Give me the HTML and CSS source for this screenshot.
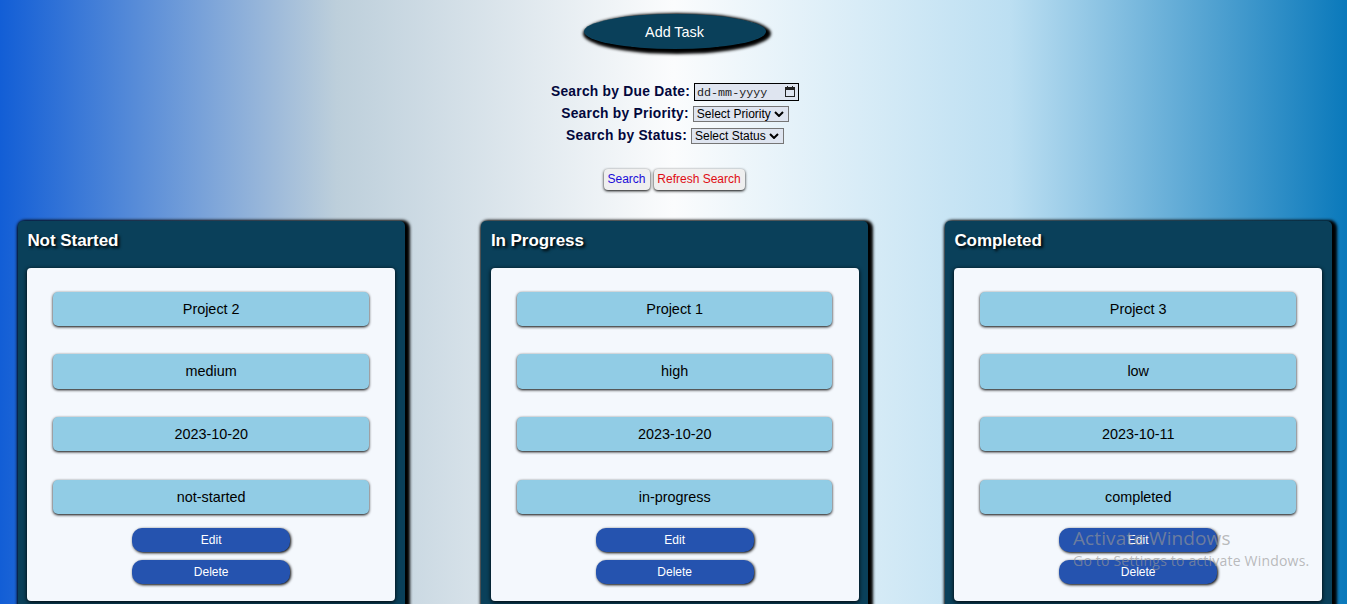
FILE: index.html
```html
<!DOCTYPE html>
<html lang="en">
<head>
<meta charset="utf-8">
<title>Task Board</title>
<link rel="stylesheet" href="styles.css">
</head>
<body>
<header class="top"><button class="add-task">Add Task</button></header>
<form class="filters">
  <div class="filter-row"><label>Search by Due Date:</label><span class="date-field"><span class="date-text">dd-mm-yyyy</span><svg class="calendar" viewBox="0 0 10 11"><path d="M0 1h2V0h1v1h4V0h1v1h2v10H0zM1 4v6h8V4z" fill="#222" fill-rule="evenodd"/></svg></span></div>
  <div class="filter-row"><label>Search by Priority:</label><span class="select priority"><span>Select Priority</span><svg class="chevron" viewBox="0 0 10 6"><path d="M1 1l4 4 4-4" fill="none" stroke="#000" stroke-width="2"/></svg></span></div>
  <div class="filter-row"><label>Search by Status:</label><span class="select status"><span>Select Status</span><svg class="chevron" viewBox="0 0 10 6"><path d="M1 1l4 4 4-4" fill="none" stroke="#000" stroke-width="2"/></svg></span></div>
  <div class="actions"><button type="button" class="action search">Search</button><button type="button" class="action refresh">Refresh Search</button></div>
</form>
<main class="board">
  <section class="column">
    <h2 class="title">Not Started</h2>
    <div class="card">
      <p class="item">Project 2</p><p class="item">medium</p><p class="item">2023-10-20</p><p class="item">not-started</p>
      <button class="task-btn">Edit</button><button class="task-btn">Delete</button>
    </div>
  </section>
  <section class="column">
    <h2 class="title">In Progress</h2>
    <div class="card">
      <p class="item">Project 1</p><p class="item">high</p><p class="item">2023-10-20</p><p class="item">in-progress</p>
      <button class="task-btn">Edit</button><button class="task-btn">Delete</button>
    </div>
  </section>
  <section class="column">
    <h2 class="title">Completed</h2>
    <div class="card">
      <p class="item">Project 3</p><p class="item">low</p><p class="item">2023-10-11</p><p class="item">completed</p>
      <button class="task-btn">Edit</button><button class="task-btn">Delete</button>
    </div>
  </section>
</main>
<aside class="watermark"><div class="wm-title">Activate Windows</div><div class="wm-text">Go to Settings to activate Windows.</div></aside>
</body>
</html>
```

FILE: styles.css
```css
* { box-sizing: border-box; }
html { height: 100%; overflow: hidden; }
body {
  margin: 0;
  height: 604px;
  overflow: hidden;
  font-family: "Liberation Sans", Arial, sans-serif;
  background: linear-gradient(to right, #125ed6 0%, #bdcfdb 25%, #fbfcfd 50%, #bcdff2 75%, #0a79bb 100%);
}
button { font-family: inherit; border: 0; padding: 0; }
.top { display: flex; justify-content: center; padding: 14px 0 0 2px; }
.add-task {
  width: 182px;
  height: 35px;
  border-radius: 50%;
  background: #0a405a;
  color: #fff;
  font-size: 14.4px;
  box-shadow: 2px 2px 3px 3px #000;
}
.filters { display: flex; flex-direction: column; align-items: center; padding: 32px 0 0 3px; }
.filter-row { display: flex; align-items: center; gap: 4px; height: 22px; }
.filter-row label { font-size: 13.8px; font-weight: bold; letter-spacing: 0.26px; color: #02073c; line-height: 20px; }
.date-field {
  display: flex;
  align-items: center;
  justify-content: space-between;
  width: 105px;
  height: 18px;
  padding: 0 3px 0 2px;
  border: 1px solid #000;
  background: #dfe5f0;
}
.date-text { font: 11.7px "Liberation Mono", monospace; color: #222; padding-top: 1px; }
.calendar { width: 10px; height: 11px; margin-bottom: 1px; }
.select {
  display: flex;
  align-items: center;
  justify-content: space-between;
  height: 16px;
  padding: 0 4px 0 3px;
  border: 1px solid #767676;
  background: #dfe5f0;
  color: #000;
  font-size: 12px;
  line-height: 14px;
  white-space: nowrap;
}
.chevron { width: 10px; height: 6px; }
.priority { width: 96px; }
.status { width: 93px; }
.actions { display: flex; gap: 4px; margin: 22px 2px 0 0; }
.action {
  height: 21px;
  padding-bottom: 2px;
  border-radius: 4px;
  background: #efefef;
  font-size: 12px;
  box-shadow: 0 1px 3px #000;
}
.search { width: 46px; color: #1b0bd8; }
.refresh { width: 91px; color: #e00b12; }
.board { display: flex; justify-content: space-between; padding: 31px 15.4px 0 17.8px; }
.column {
  width: 386.8px;
  height: 390px;
  padding: 0 9.6px;
  border-radius: 5px;
  background: #0a405a;
  box-shadow: 2px 2px 3px 3px #000;
}
.title {
  margin: 0;
  height: 47px;
  padding-top: 10px;
  font-size: 17px;
  line-height: 20px;
  letter-spacing: -0.05px;
  color: #fff;
  text-shadow: 2px 2px 3px #000;
}
.card {
  display: flex;
  flex-direction: column;
  align-items: center;
  height: 333px;
  padding-top: 23.8px;
  border-radius: 4px;
  background: #f4f8fd;
  box-shadow: 0 1px 4px #000;
}
.item {
  width: 315.6px;
  height: 34.4px;
  margin: 0 0 28.2px;
  border-radius: 5px;
  background: #91cce5;
  color: #000;
  font-size: 14.4px;
  line-height: 34px;
  text-align: center;
  box-shadow: 0 1px 3px #000;
}
.item:nth-of-type(4) { margin-bottom: 14px; }
.task-btn {
  flex: none;
  width: 158px;
  height: 24px;
  margin-bottom: 8px;
  border-radius: 10px;
  background: #2553af;
  color: #fff;
  font-size: 12px;
  box-shadow: 1px 1px 3px #000;
}
.watermark {
  position: absolute;
  left: 1073px;
  top: 526px;
  font-family: "Open Sans", "Noto Sans", sans-serif;
  color: rgba(150, 150, 150, 0.65);
  white-space: nowrap;
}
.wm-title { font-size: 19px; line-height: 25px; letter-spacing: 0.1px; }
.wm-text { font-size: 14px; line-height: 20px; letter-spacing: 0.2px; }
```
